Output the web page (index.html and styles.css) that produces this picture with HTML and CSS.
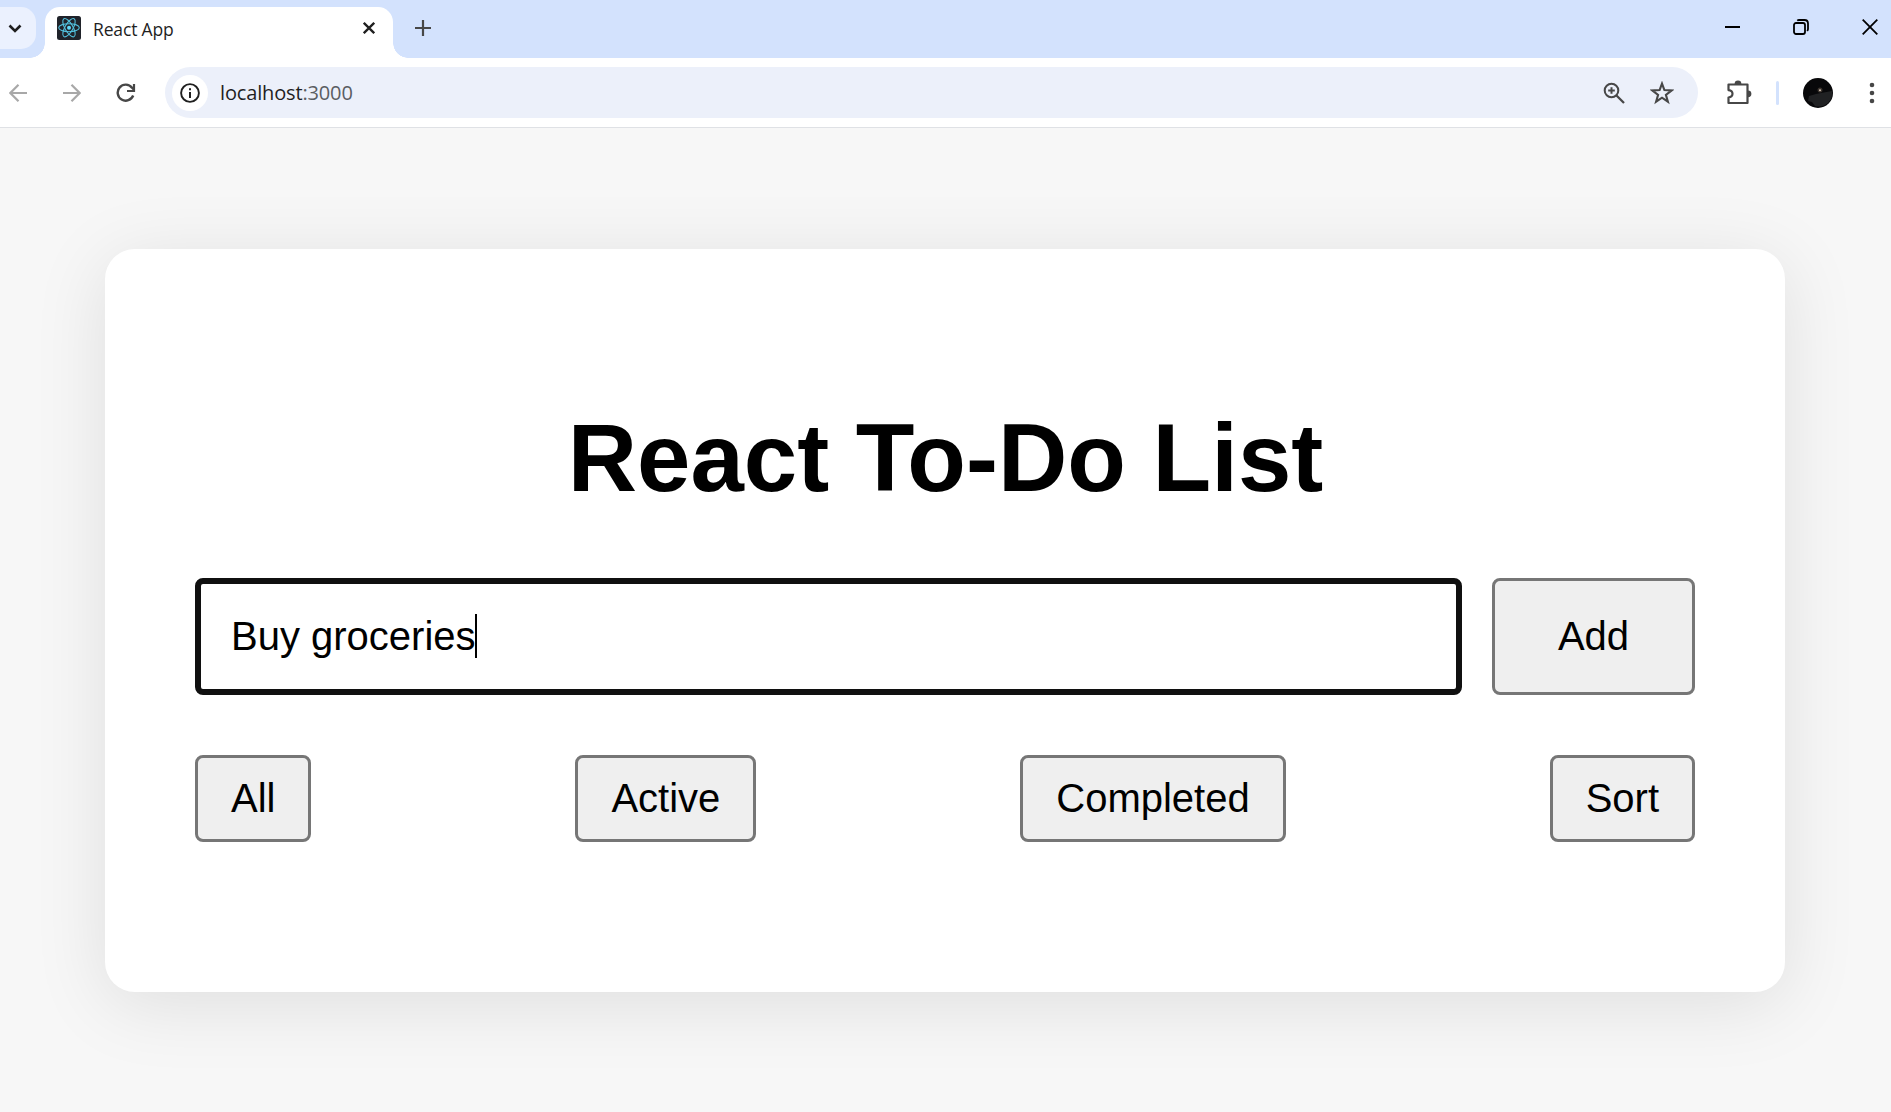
FILE: index.html
```html
<!DOCTYPE html>
<html lang="en">
<head>
<meta charset="utf-8">
<title>React App</title>
<link rel="stylesheet" href="styles.css">
</head>
<body>
<header class="tabstrip">
  <div class="tab-search"><svg width="30" height="42" viewBox="0 0 30 42"><path d="M3.500 18.500l5.500 5.500 5.500-5.500" fill="none" stroke="#1f1f1f" stroke-width="2.600" /></svg></div>
  <div class="tab">
    <svg class="favicon" width="24" height="24" viewBox="0 0 24 24"><rect width="24" height="24" rx="2.500" fill="#20232a"/><circle cx="12" cy="11.700" r="2" fill="#61dafb"/><g fill="none" stroke="#53c1de" stroke-width="1.100"><ellipse cx="12" cy="11.700" rx="10.300" ry="4"/><ellipse cx="12" cy="11.700" rx="10.300" ry="4" transform="rotate(60 12 11.700)"/><ellipse cx="12" cy="11.700" rx="10.300" ry="4" transform="rotate(120 12 11.700)"/></g></svg>
    <span class="tab-title">React App</span>
    <svg class="tab-close" width="12" height="12" viewBox="0 0 12 12"><path d="M.8.8l10.400 10.400M11.200.8L.8 11.200" stroke="#1f1f1f" stroke-width="2.300"/></svg>
  </div>
  <svg class="new-tab" width="16" height="16" viewBox="0 0 16 16"><path d="M8 0v16M0 8h16" stroke="#474747" stroke-width="2.200"/></svg>
  <div class="window-controls">
    <svg width="15" height="16" viewBox="0 0 15 16"><path d="M0 8h15" stroke="#000" stroke-width="2"/></svg>
    <svg width="16" height="16" viewBox="0 0 16 16" fill="none" stroke="#000" stroke-width="1.800"><rect x="1" y="4" width="11" height="11" rx="2"/><path d="M4.200 1.600Q5 1 6 1h5.500Q15 1 15 4.500V10q0 1-.8 2"/></svg>
    <svg width="16" height="16" viewBox="0 0 16 16"><path d="M.7.700l14.600 14.600M15.300.7L.7 15.300" stroke="#000" stroke-width="1.800"/></svg>
  </div>
</header>
<nav class="toolbar">
  <svg class="nav-icon back" width="18" height="18" viewBox="0 0 18 18"><path d="M18 9H1.500M9.500.8L1.300 9l8.200 8.200" /></svg>
  <svg class="nav-icon forward" width="18" height="18" viewBox="0 0 18 18"><path d="M0 9h16.500M8.500.8L16.700 9l-8.200 8.200" /></svg>
  <svg class="reload" width="20" height="20" viewBox="0 0 20 20"><path d="M17.200 12.500A8 8 0 1 1 16 4.700l2 2" fill="none" stroke="#474747" stroke-width="2.400"/><path d="M18 1v7h-7" fill="none" stroke="#474747" stroke-width="2.200"/></svg>
  <div class="omnibox">
    <span class="site-info"><svg width="20" height="20" viewBox="0 0 20 20"><circle cx="10" cy="10" r="8.900" fill="none" stroke="#1f1f1f" stroke-width="1.900"/><path d="M10 9v6M10 5.200v2.100" stroke="#1f1f1f" stroke-width="2"/></svg></span>
    <span class="url">localhost<span class="port">:3000</span></span>
    <svg class="zoom-icon" width="22" height="22" viewBox="0 0 22 22" fill="none" stroke="#474747" stroke-width="2"><circle cx="8.500" cy="8.500" r="6.800"/><path d="M13.500 13.500l7.500 7.500" stroke-width="2.300"/><path d="M8.500 5.200v6.600M5.200 8.500h6.600" stroke-width="2"/></svg>
    <svg class="star" width="24" height="24" viewBox="0 0 24 24"><path d="M12 2.600l2.400 6.500 7.100.4-5.600 4.300 2 6.900-5.900-4-5.900 4 2-6.900-5.600-4.300 7.100-.4z" fill="none" stroke="#474747" stroke-width="2.100"/></svg>
  </div>
  <svg class="extensions" width="26" height="26" viewBox="0 0 26 26"><path d="M2.500 4.500h19v18.500h-19v-5.500q4-.5 4-3.700t-4-3.700z" fill="none" stroke="#474747" stroke-width="2.200" stroke-linejoin="round"/><path d="M8.600 4a3.400 3.400 0 0 1 6.800 0zM22 10.400a3.400 3.400 0 0 1 0 6.800z" fill="#474747"/></svg>
  <span class="divider"></span>
  <svg class="avatar" width="30" height="30" viewBox="0 0 30 30"><circle cx="15" cy="15" r="15" fill="#08080a"/><path d="M6 18l7-2 5-1 11-2q1 7-4 12-6 5-13 3l-3-4-4-1z" fill="#202123"/><circle cx="17" cy="12" r="2.500" fill="#3a332e"/><circle cx="17" cy="12.300" r="1" fill="#d8c8b8"/></svg>
  <svg class="menu" width="6" height="22" viewBox="0 0 6 22" fill="#474747"><circle cx="3" cy="3" r="2.300"/><circle cx="3" cy="11" r="2.300"/><circle cx="3" cy="19" r="2.300"/></svg>
</nav>
<main class="page">
  <section class="card">
    <h1>React To-Do List</h1>
    <div class="entry">
      <div class="field">Buy groceries<span class="caret"></span></div>
      <button class="add">Add</button>
    </div>
    <div class="filters">
      <button>All</button>
      <button>Active</button>
      <button>Completed</button>
      <button>Sort</button>
    </div>
  </section>
</main>
</body>
</html>
```

FILE: styles.css
```css
* { box-sizing: border-box; }
body { margin: 0; height: 1112px; overflow: hidden; display: flex; flex-direction: column; background: #f7f7f7; font-family: "Liberation Sans", Arial, sans-serif; }
svg { display: block; flex: none; }

.tabstrip { flex: none; height: 58px; background: #d3e2fd; display: flex; align-items: flex-start; }
.tab-search { margin-top: 7px; width: 36px; height: 42px; padding-left: 6px; border-radius: 0 15px 15px 0; background: #ebf1fe; }
.tab { position: relative; margin: 7px 0 0 9px; width: 348px; height: 51px; padding: 9px 18px 0 12px; display: flex; align-items: flex-start; background: #fff; border-radius: 15px 15px 0 0; }
.tab::before, .tab::after { content: ""; position: absolute; bottom: 0; width: 15px; height: 15px; }
.tab::before { left: -15px; background: radial-gradient(circle at 0 0, transparent 14.500px, #fff 15px); }
.tab::after { right: -15px; background: radial-gradient(circle at 100% 0, transparent 14.500px, #fff 15px); }
.tab-title { margin: 1px 0 0 12px; font: 17.500px/24px "Open Sans", "Noto Sans", sans-serif; letter-spacing: -.15px; color: #1f1f1f; white-space: nowrap; }
.tab-close { margin: 6px 0 0 auto; }
.new-tab { margin: 20px 0 0 22px; }
.window-controls { margin: 19px 13px 0 auto; display: flex; gap: 53px; }

.toolbar { flex: none; height: 70px; background: #fff; border-bottom: 1px solid #dfe1e5; display: flex; align-items: center; }
.nav-icon { fill: none; stroke: #a8a8a8; stroke-width: 2.200; }
.back { margin-left: 9px; }
.forward { margin-left: 36px; }
.reload { margin-left: 35px; }
.omnibox { margin-left: 29px; width: 1533px; height: 51px; padding: 0 24px 0 7px; border-radius: 26px; background: #ecf0fa; display: flex; align-items: center; }
.site-info { width: 36px; height: 36px; border-radius: 50%; background: #fff; display: grid; place-items: center; }
.url { margin: 1px 0 0 12px; font: 20px/28px "Open Sans", "Noto Sans", sans-serif; letter-spacing: -.15px; color: #1f1f1f; }
.port { color: #5a5d62; }
.zoom-icon { margin-left: auto; }
.star { margin-left: 25px; }
.extensions { margin-left: 28px; }
.divider { margin-left: 24px; width: 3px; height: 24px; border-radius: 2px; background: #d3e2fd; }
.avatar { margin-left: 24px; }
.menu { margin-left: 36px; }

.page { flex: 1; padding: 121px 0 0 105px; }
.card { width: 1680px; height: 743px; padding: 154px 90px 0; border-radius: 30px; background: #fff; box-shadow: 0 12px 75px rgba(0, 0, 0, .1); }
h1 { margin: 0; padding-left: 1px; font-size: 96px; line-height: 110px; text-align: center; }
.entry { margin-top: 65px; display: flex; gap: 30px; height: 117px; }
.field { flex: 1; padding: 0 30px; border: 6px solid #101010; border-radius: 8px; display: flex; align-items: center; font-size: 40px; color: #000; }
.caret { width: 2px; height: 44px; margin: 0 0 2px -1px; background: #000; }
button { font: 40px/46px "Liberation Sans", Arial, sans-serif; color: #000; background: #efefef; border: 3px solid #767676; border-radius: 8px; padding: 0 33px 2px; }
.add { width: 203px; }
.filters { margin-top: 60px; display: flex; justify-content: space-between; height: 87px; }
```
